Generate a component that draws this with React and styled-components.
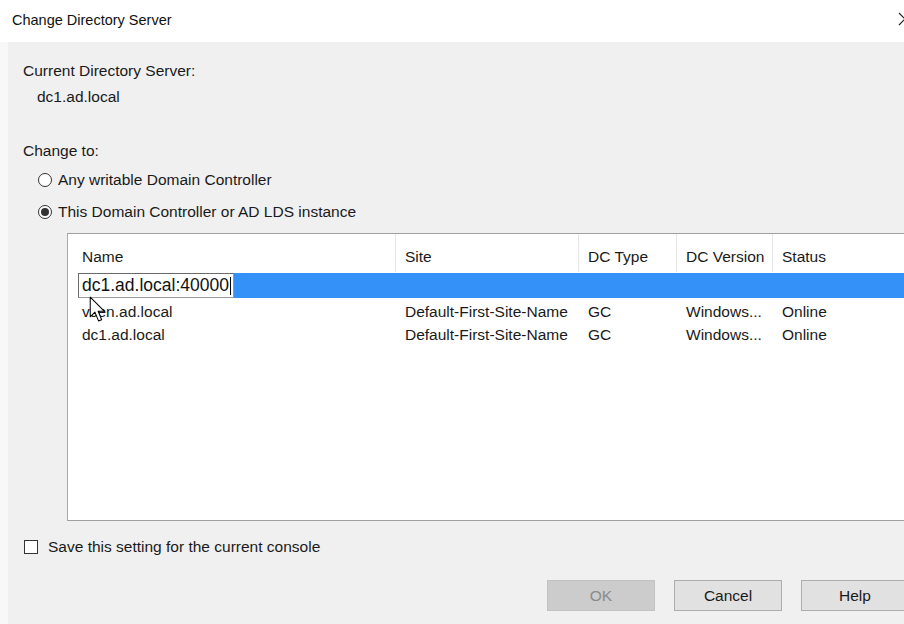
import styled, { createGlobalStyle } from 'styled-components';

const GlobalStyle = createGlobalStyle`
  html, body {
    margin: 0;
    padding: 0;
    background: #f0f0f0;
    overflow: hidden;
  }
  * {
    box-sizing: border-box;
  }
`;

const DialogStyled = styled.div`
  width: 904px;
  height: 624px;
  display: flex;
  flex-direction: column;
  overflow: hidden;
  font-family: 'Liberation Sans', Arial, sans-serif;
  font-size: 15.5px;
  color: #1a1a1a;
`;

const TitleBarStyled = styled.div`
  height: 42px;
  flex-shrink: 0;
  background: #ffffff;
  display: flex;
  align-items: center;
  justify-content: space-between;
  padding-left: 12px;
`;

const TitleTextStyled = styled.div`
  font-size: 14.5px;
  color: #111;
  margin-top: -2px;
`;

const CloseStyled = styled.div`
  width: 12px;
  height: 14px;
  margin-right: -6px;
  margin-top: -4px;
  display: flex;
`;

const BodyStyled = styled.div`
  flex: 1;
  display: flex;
  flex-direction: column;
  border-left: 8px solid #f8f8f8;
  padding-left: 15px;
`;

const LabelStyled = styled.div`
  line-height: 16px;
  white-space: nowrap;
  margin-top: ${(props) => props.top || 0}px;
  padding-left: ${(props) => props.indent || 0}px;
`;

const RadioRowStyled = styled.div`
  display: flex;
  align-items: center;
  height: 16px;
  padding-left: 15px;
  gap: 6px;
  margin-top: ${(props) => props.top || 0}px;
`;

const RadioCircleStyled = styled.span`
  width: 14px;
  height: 14px;
  flex-shrink: 0;
  border-radius: 50%;
  border: 1px solid #333;
  background: #fff;
  display: flex;
  align-items: center;
  justify-content: center;
  &::after {
    content: '';
    width: 8px;
    height: 8px;
    border-radius: 50%;
    background: ${(props) => (props.checked ? '#333' : 'transparent')};
  }
`;

const ListBoxStyled = styled.div`
  position: relative;
  margin-top: 13px;
  margin-left: 44px;
  margin-right: -40px;
  height: 288px;
  background: #ffffff;
  border-top: 1px solid #a0a0a0;
  border-left: 1px solid #a9a9a9;
  border-bottom: 1px solid #a0a0a0;
`;

const HeaderStyled = styled.div`
  display: grid;
  grid-template-columns: 328px 183px 98px 96px 1fr;
  height: 38px;
`;

const HeaderCellStyled = styled.div`
  display: flex;
  align-items: center;
  padding-left: ${(props) => props.pad || 9}px;
  padding-top: 7px;
  border-right: 1px solid #e5e5e5;
  color: #1a1a1a;
`;

const RowStyled = styled.div`
  display: grid;
  grid-template-columns: 328px 183px 98px 96px 1fr;
  height: 23px;
  align-items: center;
`;

const CellStyled = styled.div`
  padding-left: ${(props) => props.pad || 9}px;
  white-space: nowrap;
  overflow: hidden;
`;

const SelectedRowStyled = styled.div`
  display: flex;
  height: 25px;
  margin-top: 1px;
  margin-bottom: 2px;
  padding-left: 10px;
`;

const SelectedFillStyled = styled.div`
  flex: 1;
  background: #3391f7;
`;

const EditBoxStyled = styled.div`
  width: 156px;
  height: 25px;
  background: #ffffff;
  border: 1px solid #6b6b6b;
  border-right-color: #9a9a9a;
  border-bottom-color: #9a9a9a;
  display: flex;
  align-items: center;
  padding-left: 3px;
  font-size: 17.5px;
  white-space: nowrap;
  color: #111;
`;

const CaretStyled = styled.span`
  display: inline-block;
  width: 1px;
  height: 18px;
  background: #000;
  margin-left: 1px;
`;

const PointerStyled = styled.svg`
  position: absolute;
  left: 21px;
  top: 62px;
`;

const CheckRowStyled = styled.div`
  display: flex;
  align-items: center;
  gap: 10px;
  height: 16px;
  margin-top: 18px;
  padding-left: 1px;
  white-space: nowrap;
`;

const CheckBoxStyled = styled.span`
  width: 14px;
  height: 14px;
  flex-shrink: 0;
  border: 1px solid #333;
  background: #fff;
`;

const FooterStyled = styled.div`
  display: flex;
  gap: 19px;
  margin-top: 25px;
  margin-left: 524px;
  margin-right: -40px;
`;

const ButtonStyled = styled.div`
  width: 108px;
  height: 31px;
  flex-shrink: 0;
  display: flex;
  align-items: center;
  justify-content: center;
  padding-top: 1px;
  font-size: 15.5px;
  background: ${(props) => (props.disabled ? '#cccccc' : '#e1e1e1')};
  border: 1px solid ${(props) => (props.disabled ? '#c2c2c2' : '#adadad')};
  color: ${(props) => (props.disabled ? '#8a8a8a' : '#1a1a1a')};
`;

const servers = [
  { name: 'vcen.ad.local', site: 'Default-First-Site-Name', type: 'GC', version: 'Windows...', status: 'Online' },
  { name: 'dc1.ad.local', site: 'Default-First-Site-Name', type: 'GC', version: 'Windows...', status: 'Online' },
];

const ServerRow = ({ server }) => (
  <RowStyled>
    <CellStyled pad={14}>{server.name}</CellStyled>
    <CellStyled>{server.site}</CellStyled>
    <CellStyled>{server.type}</CellStyled>
    <CellStyled>{server.version}</CellStyled>
    <CellStyled>{server.status}</CellStyled>
  </RowStyled>
);

const Radio = ({ checked, label, top }) => (
  <RadioRowStyled top={top}>
    <RadioCircleStyled checked={checked} />
    <span>{label}</span>
  </RadioRowStyled>
);

export default function App() {
  return (
    <>
      <GlobalStyle />
      <DialogStyled>
        <TitleBarStyled>
          <TitleTextStyled>Change Directory Server</TitleTextStyled>
          <CloseStyled>
            <svg width="12" height="14" viewBox="0 0 12 14">
              <path d="M1 1 L7 7 L1 13" fill="none" stroke="#222" strokeWidth="1.2" />
            </svg>
          </CloseStyled>
        </TitleBarStyled>
        <BodyStyled>
          <LabelStyled top={21}>Current Directory Server:</LabelStyled>
          <LabelStyled top={10} indent={14}>dc1.ad.local</LabelStyled>
          <LabelStyled top={38}>Change to:</LabelStyled>
          <Radio top={13} label="Any writable Domain Controller" />
          <Radio top={16} checked label="This Domain Controller or AD LDS instance" />
          <ListBoxStyled>
            <HeaderStyled>
              <HeaderCellStyled pad={14}>Name</HeaderCellStyled>
              <HeaderCellStyled>Site</HeaderCellStyled>
              <HeaderCellStyled>DC Type</HeaderCellStyled>
              <HeaderCellStyled>DC Version</HeaderCellStyled>
              <HeaderCellStyled>Status</HeaderCellStyled>
            </HeaderStyled>
            <SelectedRowStyled>
              <EditBoxStyled>
                dc1.ad.local:40000
                <CaretStyled />
              </EditBoxStyled>
              <SelectedFillStyled />
            </SelectedRowStyled>
            {servers.map((server, index) => (
              <ServerRow key={index} server={server} />
            ))}
            <PointerStyled width="17" height="27" viewBox="0 0 16 26">
              <path
                d="M1 1 L1 20 L5.5 15.5 L9 24 L12 22.8 L8.6 14.6 L14.5 14.6 Z"
                fill="#ffffff"
                stroke="#000000"
                strokeWidth="1"
                strokeLinejoin="round"
              />
            </PointerStyled>
          </ListBoxStyled>
          <CheckRowStyled>
            <CheckBoxStyled />
            <span>Save this setting for the current console</span>
          </CheckRowStyled>
          <FooterStyled>
            <ButtonStyled disabled>OK</ButtonStyled>
            <ButtonStyled>Cancel</ButtonStyled>
            <ButtonStyled>Help</ButtonStyled>
          </FooterStyled>
        </BodyStyled>
      </DialogStyled>
    </>
  );
}
